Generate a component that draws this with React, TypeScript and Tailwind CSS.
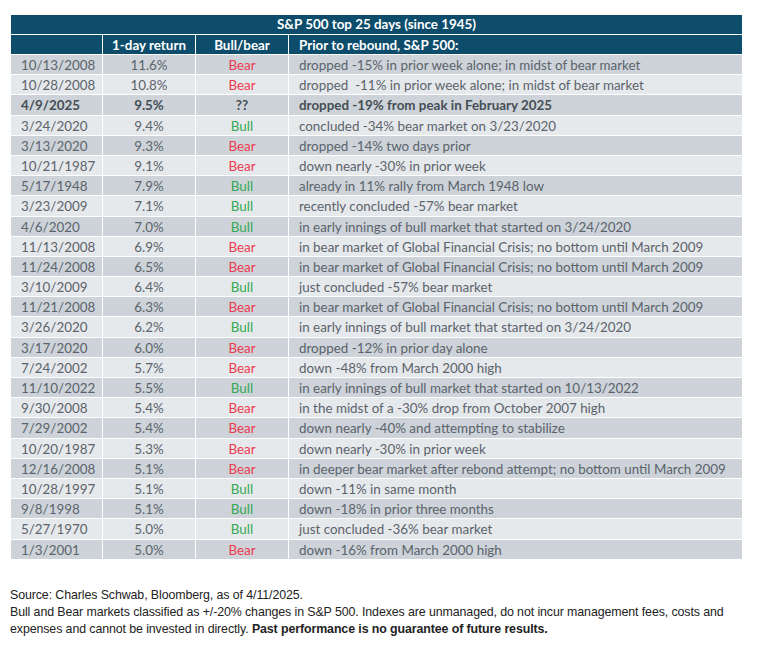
import React from 'react'

type Row = [string, string, string, string]

const rows: Row[] = [
  ['10/13/2008', '11.6%', 'Bear', 'dropped -15% in prior week alone; in midst of bear market'],
  ['10/28/2008', '10.8%', 'Bear', 'dropped  -11% in prior week alone; in midst of bear market'],
  ['4/9/2025', '9.5%', '??', 'dropped -19% from peak in February 2025'],
  ['3/24/2020', '9.4%', 'Bull', 'concluded -34% bear market on 3/23/2020'],
  ['3/13/2020', '9.3%', 'Bear', 'dropped -14% two days prior'],
  ['10/21/1987', '9.1%', 'Bear', 'down nearly -30% in prior week'],
  ['5/17/1948', '7.9%', 'Bull', 'already in 11% rally from March 1948 low'],
  ['3/23/2009', '7.1%', 'Bull', 'recently concluded -57% bear market'],
  ['4/6/2020', '7.0%', 'Bull', 'in early innings of bull market that started on 3/24/2020'],
  ['11/13/2008', '6.9%', 'Bear', 'in bear market of Global Financial Crisis; no bottom until March 2009'],
  ['11/24/2008', '6.5%', 'Bear', 'in bear market of Global Financial Crisis; no bottom until March 2009'],
  ['3/10/2009', '6.4%', 'Bull', 'just concluded -57% bear market'],
  ['11/21/2008', '6.3%', 'Bear', 'in bear market of Global Financial Crisis; no bottom until March 2009'],
  ['3/26/2020', '6.2%', 'Bull', 'in early innings of bull market that started on 3/24/2020'],
  ['3/17/2020', '6.0%', 'Bear', 'dropped -12% in prior day alone'],
  ['7/24/2002', '5.7%', 'Bear', 'down -48% from March 2000 high'],
  ['11/10/2022', '5.5%', 'Bull', 'in early innings of bull market that started on 10/13/2022'],
  ['9/30/2008', '5.4%', 'Bear', 'in the midst of a -30% drop from October 2007 high'],
  ['7/29/2002', '5.4%', 'Bear', 'down nearly -40% and attempting to stabilize'],
  ['10/20/1987', '5.3%', 'Bear', 'down nearly -30% in prior week'],
  ['12/16/2008', '5.1%', 'Bear', 'in deeper bear market after rebond attempt; no bottom until March 2009'],
  ['10/28/1997', '5.1%', 'Bull', 'down -11% in same month'],
  ['9/8/1998', '5.1%', 'Bull', 'down -18% in prior three months'],
  ['5/27/1970', '5.0%', 'Bull', 'just concluded -36% bear market'],
  ['1/3/2001', '5.0%', 'Bear', 'down -16% from March 2000 high'],
]

export default function App() {
  return (
    <div className="min-h-[656px] w-[759px] bg-white">
      {/* Table */}
      <div
        className="ml-[11px] pt-[15px] w-[731px] text-[13.4px] text-[#5b636b]"
        style={{ fontFamily: 'Lato, "Open Sans", sans-serif' }}
      >
        <div className="h-[20px] bg-[#0d4d6b] border-b border-white flex items-center justify-center text-white font-bold">
          S&amp;P 500 top 25 days (since 1945)
        </div>
        <div className="grid grid-cols-[92px_93px_93px_1fr] h-[20px] bg-[#0d4d6b] border-b border-white text-white font-bold">
          <div className="border-r border-white" />
          <div className="border-r border-white flex items-center justify-center">1-day return</div>
          <div className="border-r border-white flex items-center justify-center">Bull/bear</div>
          <div className="flex items-center pl-[10px]">Prior to rebound, S&amp;P 500:</div>
        </div>
        {rows.map((r, i) => (
          <div
            key={r[0]}
            className={`grid grid-cols-[92px_93px_93px_1fr] h-[20.2px] border-b border-white ${
              i % 2 === 0 ? 'bg-[#cdd3d9]' : 'bg-[#e6e9ec]'
            } ${r[2] === '??' ? 'font-bold text-[#464e55]' : ''}`}
          >
            <div className="border-r border-white flex items-center pl-[10px]">{r[0]}</div>
            <div className="border-r border-white flex items-center justify-center">{r[1]}</div>
            <div
              className={`border-r border-white flex items-center justify-center ${
                r[2] === 'Bear' ? 'text-[#ec3a4f]' : r[2] === 'Bull' ? 'text-[#34a853]' : ''
              }`}
            >
              {r[2]}
            </div>
            <div className="flex items-center pl-[10px] whitespace-pre">{r[3]}</div>
          </div>
        ))}
      </div>

      {/* Footnotes */}
      <div
        className="mt-[27px] pl-[10px] pr-[10px] text-[12.4px] leading-[17px] tracking-[-0.1px] text-[#222]"
        style={{ fontFamily: '"Liberation Sans", Arial, sans-serif' }}
      >
        <p>Source: Charles Schwab, Bloomberg, as of 4/11/2025.</p>
        <p>
          Bull and Bear markets classified as +/-20% changes in S&amp;P 500. Indexes are unmanaged, do not incur
          management fees, costs and
          <br />
          expenses and cannot be invested in directly.{' '}
          <span className="font-bold">Past performance is no guarantee of future results.</span>
        </p>
      </div>
    </div>
  )
}
